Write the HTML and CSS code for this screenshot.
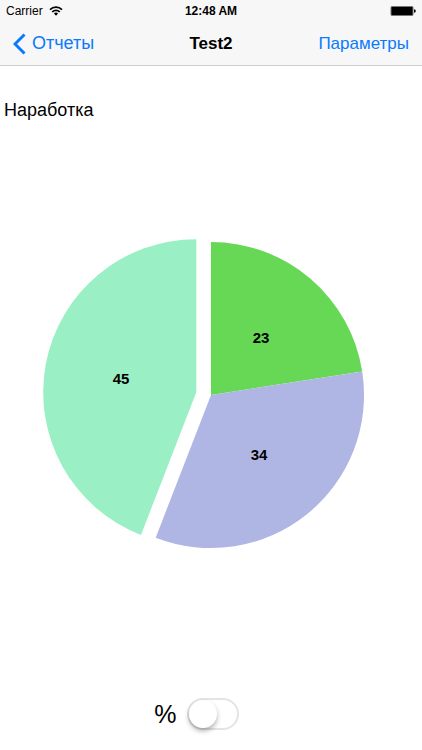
FILE: index.html
```
<!DOCTYPE html>
<html lang="ru">
<head>
  <meta charset="UTF-8">
  <meta name="viewport" content="width=device-width, initial-scale=1">
  <title>Test2</title>
  <link rel="stylesheet" href="styles.css">
</head>
<body>

  <header class="header">
    <div class="status">
      <div class="carrier">
        <span>Carrier</span>
        <svg class="wifi" viewBox="0 0 14 10" width="14" height="10" aria-hidden="true">
          <path d="M1 3.7a8.5 8.5 0 0 1 12 0M3.2 6a5.4 5.4 0 0 1 7.6 0" fill="none" stroke="#000" stroke-width="1.7"/>
          <path d="M7 9.7L4.9 7.6a3 3 0 0 1 4.2 0z"/>
        </svg>
      </div>
      <span class="time">12:48 AM</span>
      <svg class="battery" viewBox="0 0 26 10" width="26" height="10" aria-hidden="true">
        <rect x="1" y="0.5" width="22" height="9" rx="1" fill="#000" stroke="#777" stroke-width="1"/>
        <path d="M24 3.2a1.8 1.8 0 0 1 0 3.6z"/>
      </svg>
    </div>
    <nav class="nav">
      <a class="back" href="#">
        <svg viewBox="0 0 13 22" width="13" height="22" aria-hidden="true">
          <path d="M11.5 1.5L2 11l9.5 9.5" fill="none" stroke="#0a7aff" stroke-width="3"/>
        </svg>
        <span>Отчеты</span>
      </a>
      <h1>Test2</h1>
      <a class="params" href="#">Параметры</a>
    </nav>
  </header>

  <main class="content">
    <h2>Наработка</h2>
    <div class="chart">
      <svg viewBox="0 0 340 320" role="img" aria-label="Наработка">
        <path class="slice-a" d="M170 160V7A153 153 0 0 1 321.2 136.5z"/>
        <path class="slice-b" d="M170 160L321.2 136.5A153 153 0 0 1 114.7 302.7z"/>
        <path class="slice-c" d="M155.3 157.2L100 299.9A153 153 0 0 1 155.3 4.2z"/>
        <text x="220" y="108">23</text>
        <text x="218" y="225">34</text>
        <text x="80" y="149">45</text>
      </svg>
    </div>
  </main>

  <footer class="footer">
    <label for="percent">%</label>
    <input class="switch" type="checkbox" role="switch" id="percent">
  </footer>

</body>
</html>
```

FILE: styles.css
```
* {
  box-sizing: border-box;
}
body {
  margin: 0;
  min-height: 100vh;
  display: flex;
  flex-direction: column;
  background: #fff;
  color: #000;
  font-family: "Liberation Sans", Arial, sans-serif;
  font-size: 18px;
}
h1, h2 {
  margin: 0;
}
.header {
  background: #f7f7f7;
  border-bottom: 1px solid #cfcfcf;
}
.status, .nav {
  display: grid;
  grid-template-columns: 1fr auto 1fr;
  align-items: center;
}
.status {
  height: 22px;
  padding: 0 6px;
  font-size: 12px;
}
.carrier {
  display: flex;
  align-items: center;
  gap: 6px;
}
.time {
  font-weight: bold;
}
.battery {
  justify-self: end;
}
.nav {
  height: 43px;
  padding: 0 13px;
}
.nav a {
  color: #0a7aff;
  text-decoration: none;
}
.back {
  display: flex;
  align-items: center;
  gap: 6px;
}
.nav h1 {
  font-size: 17px;
}
.nav .params {
  justify-self: end;
  font-size: 17px;
}
.content {
  flex: 1;
  display: flex;
  flex-direction: column;
}
.content h2 {
  padding: 34px 4px 0;
  font-size: 18px;
  line-height: 20px;
  font-weight: normal;
}
.chart {
  flex: 1;
  display: flex;
  align-items: center;
  justify-content: center;
  padding: 0 41px 28px;
}
.chart svg {
  width: 100%;
  max-width: 480px;
}
.chart text {
  font-size: 15px;
  font-weight: bold;
  text-anchor: middle;
}
.slice-a {
  fill: #67d756;
}
.slice-b {
  fill: #b0b6e4;
}
.slice-c {
  fill: #9af0c4;
}
.footer {
  display: grid;
  grid-template-columns: 1fr auto 1fr;
  align-items: center;
  column-gap: 10px;
  padding: 0 0 20px 3px;
}
.footer label {
  justify-self: end;
  font-size: 25px;
}
.switch {
  appearance: none;
  width: 52px;
  height: 32px;
  margin: 0;
  border: 2px solid #e4e4e4;
  border-radius: 16px;
  background: #fff;
}
.switch::before {
  content: "";
  display: block;
  width: 28px;
  height: 28px;
  border-radius: 50%;
  background: #fff;
  box-shadow: 0 3px 5px rgba(0, 0, 0, 0.3);
}
.switch:checked {
  background: #4cd964;
  border-color: #4cd964;
}
.switch:checked::before {
  margin-left: 20px;
}
```
